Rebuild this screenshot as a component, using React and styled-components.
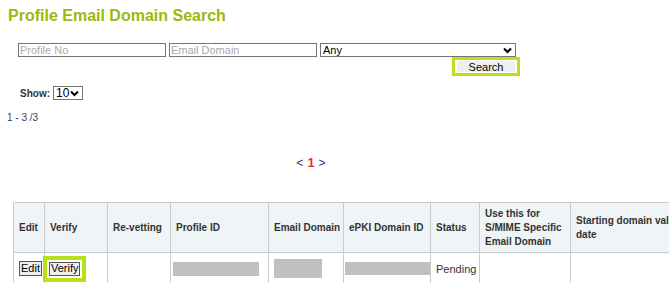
import React from "react";
import styled, { createGlobalStyle } from "styled-components";

const Global = createGlobalStyle`
  html, body { margin: 0; padding: 0; background: #fff; overflow: hidden; }
  body { font-family: "Liberation Sans", Arial, sans-serif; color: #333; }
`;

const Page = styled.div`
  width: 669px;
  height: 283px;
  overflow: hidden;
`;

const Title = styled.h1`
  margin: 0;
  padding: 6px 0 0 8px;
  font-size: 16px;
  line-height: 20px;
  font-weight: bold;
  color: #9bb80c;
`;

const Form = styled.div`
  width: 502px;
  margin: 17px 0 0 18px;
  display: flex;
  flex-direction: column;
`;

const FieldRow = styled.div`
  display: flex;
  align-items: center;
`;

const TextInput = styled.input`
  box-sizing: border-box;
  width: ${(p) => p.$w}px;
  height: 14px;
  margin-right: ${(p) => p.$gap}px;
  padding: 0 1px;
  border: 1px solid #767676;
  font-family: "Liberation Sans", Arial, sans-serif;
  font-size: 11px;
  &::placeholder { color: #a9a9a9; }
`;

const FakeSelect = styled.div`
  box-sizing: border-box;
  width: ${(p) => p.$w}px;
  height: 14px;
  border: 1px solid #767676;
  display: flex;
  align-items: center;
  justify-content: space-between;
  padding: 0 3px 0 2px;
  font-size: ${(p) => p.$fs || 11}px;
  font-weight: normal;
  color: #000;
  background: #fff;
`;

const Chevron = () => (
  <svg width="9" height="7" viewBox="0 0 9 7">
    <path d="M1 1.5 L4.5 5 L8 1.5" fill="none" stroke="#000" strokeWidth="2" />
  </svg>
);

const ButtonRow = styled.div`
  display: flex;
  justify-content: flex-end;
`;

const Highlight = styled.span`
  display: inline-flex;
  border: ${(p) => p.$bw}px solid #b7e21a;
  padding: ${(p) => p.$pad};
  margin-left: ${(p) => p.$ml || 0}px;
`;

const Btn = styled.button`
  box-sizing: border-box;
  width: ${(p) => (p.$w ? `${p.$w}px` : "auto")};
  height: ${(p) => p.$h}px;
  padding: 0 1px;
  margin: 0;
  background: #efefef;
  border: 1px solid ${(p) => p.$border};
  font-family: "Liberation Sans", Arial, sans-serif;
  font-size: 11px;
  line-height: 1;
  color: #000;
`;

const ShowRow = styled.div`
  display: flex;
  align-items: center;
  gap: 3px;
  margin: 10px 0 0 20px;
  font-size: 10px;
  font-weight: bold;
  color: #333;
`;

const Count = styled.div`
  margin: 12px 0 0 7px;
  font-size: 10px;
  color: #3a3a5e;
`;

const Pager = styled.div`
  width: 622px;
  margin-top: 33px;
  text-align: center;
  font-size: 12px;
  color: #333366;
  line-height: 14px;
`;

const PageNum = styled.span`
  color: #e0322d;
  font-weight: bold;
  font-size: 13px;
  margin: 0 4px;
`;

const Table = styled.table`
  margin: 32px 0 0 13px;
  border-collapse: collapse;
  table-layout: fixed;
  width: 700px;
  font-size: 10px;
`;

const Th = styled.th`
  background: #eff4f7;
  border: 1px solid #cbcbcb;
  padding: 0 5px;
  height: 49px;
  text-align: left;
  font-weight: bold;
  color: #333;
  line-height: 14px;
  vertical-align: middle;
  white-space: ${(p) => (p.$wrap ? "normal" : "nowrap")};
  overflow: hidden;
`;

const Td = styled.td`
  border: 1px solid #cbcbcb;
  padding: 0 ${(p) => p.$px ?? 5}px;
  height: 31px;
  font-size: 11px;
  color: #333;
  vertical-align: middle;
`;

const Redact = styled.div`
  width: ${(p) => p.$w}px;
  height: ${(p) => p.$h}px;
  background: #c0c0c0;
`;

const cols = [31, 63, 63, 98, 75, 87, 49, 91, 143];

export default function App() {
  return (
    <Page>
      <Global />
      <Title>Profile Email Domain Search</Title>
      <Form>
        <FieldRow>
          <TextInput $w={148} $gap={3} placeholder="Profile No" />
          <TextInput $w={148} $gap={3} placeholder="Email Domain" />
          <FakeSelect $w={196}>
            <span>Any</span>
            <Chevron />
          </FakeSelect>
        </FieldRow>
        <ButtonRow>
          <Highlight $bw={3} $pad="1px 2px">
            <Btn $w={58} $h={11} $border="#efefef">Search</Btn>
          </Highlight>
        </ButtonRow>
      </Form>
      <ShowRow>
        <span>Show:</span>
        <FakeSelect $w={30} $fs={12}>
          <span>10</span>
          <Chevron />
        </FakeSelect>
      </ShowRow>
      <Count>1 - 3 /3</Count>
      <Pager>
        &lt;<PageNum>1</PageNum>&gt;
      </Pager>
      <Table>
        <colgroup>
          {cols.map((w, i) => (
            <col key={i} style={{ width: w }} />
          ))}
        </colgroup>
        <thead>
          <tr>
            <Th>Edit</Th>
            <Th>Verify</Th>
            <Th>Re-vetting</Th>
            <Th>Profile ID</Th>
            <Th>Email Domain</Th>
            <Th>ePKI Domain ID</Th>
            <Th>Status</Th>
            <Th $wrap>Use this for S/MIME Specific Email Domain</Th>
            <Th $wrap>Starting domain validation date</Th>
          </tr>
        </thead>
        <tbody>
          <tr>
            <Td>
              <Btn $h={15} $border="#555">Edit</Btn>
            </Td>
            <Td $px={0}>
              <Highlight $bw={4} $pad="2px 2px" $ml={-2}>
                <Btn $w={31} $h={14} $border="#555">Verify</Btn>
              </Highlight>
            </Td>
            <Td />
            <Td $px={2}>
              <Redact $w={86} $h={14} />
            </Td>
            <Td>
              <Redact $w={48} $h={19} />
            </Td>
            <Td $px={1}>
              <Redact $w={86} $h={13} />
            </Td>
            <Td>Pending</Td>
            <Td />
            <Td />
          </tr>
        </tbody>
      </Table>
    </Page>
  );
}
